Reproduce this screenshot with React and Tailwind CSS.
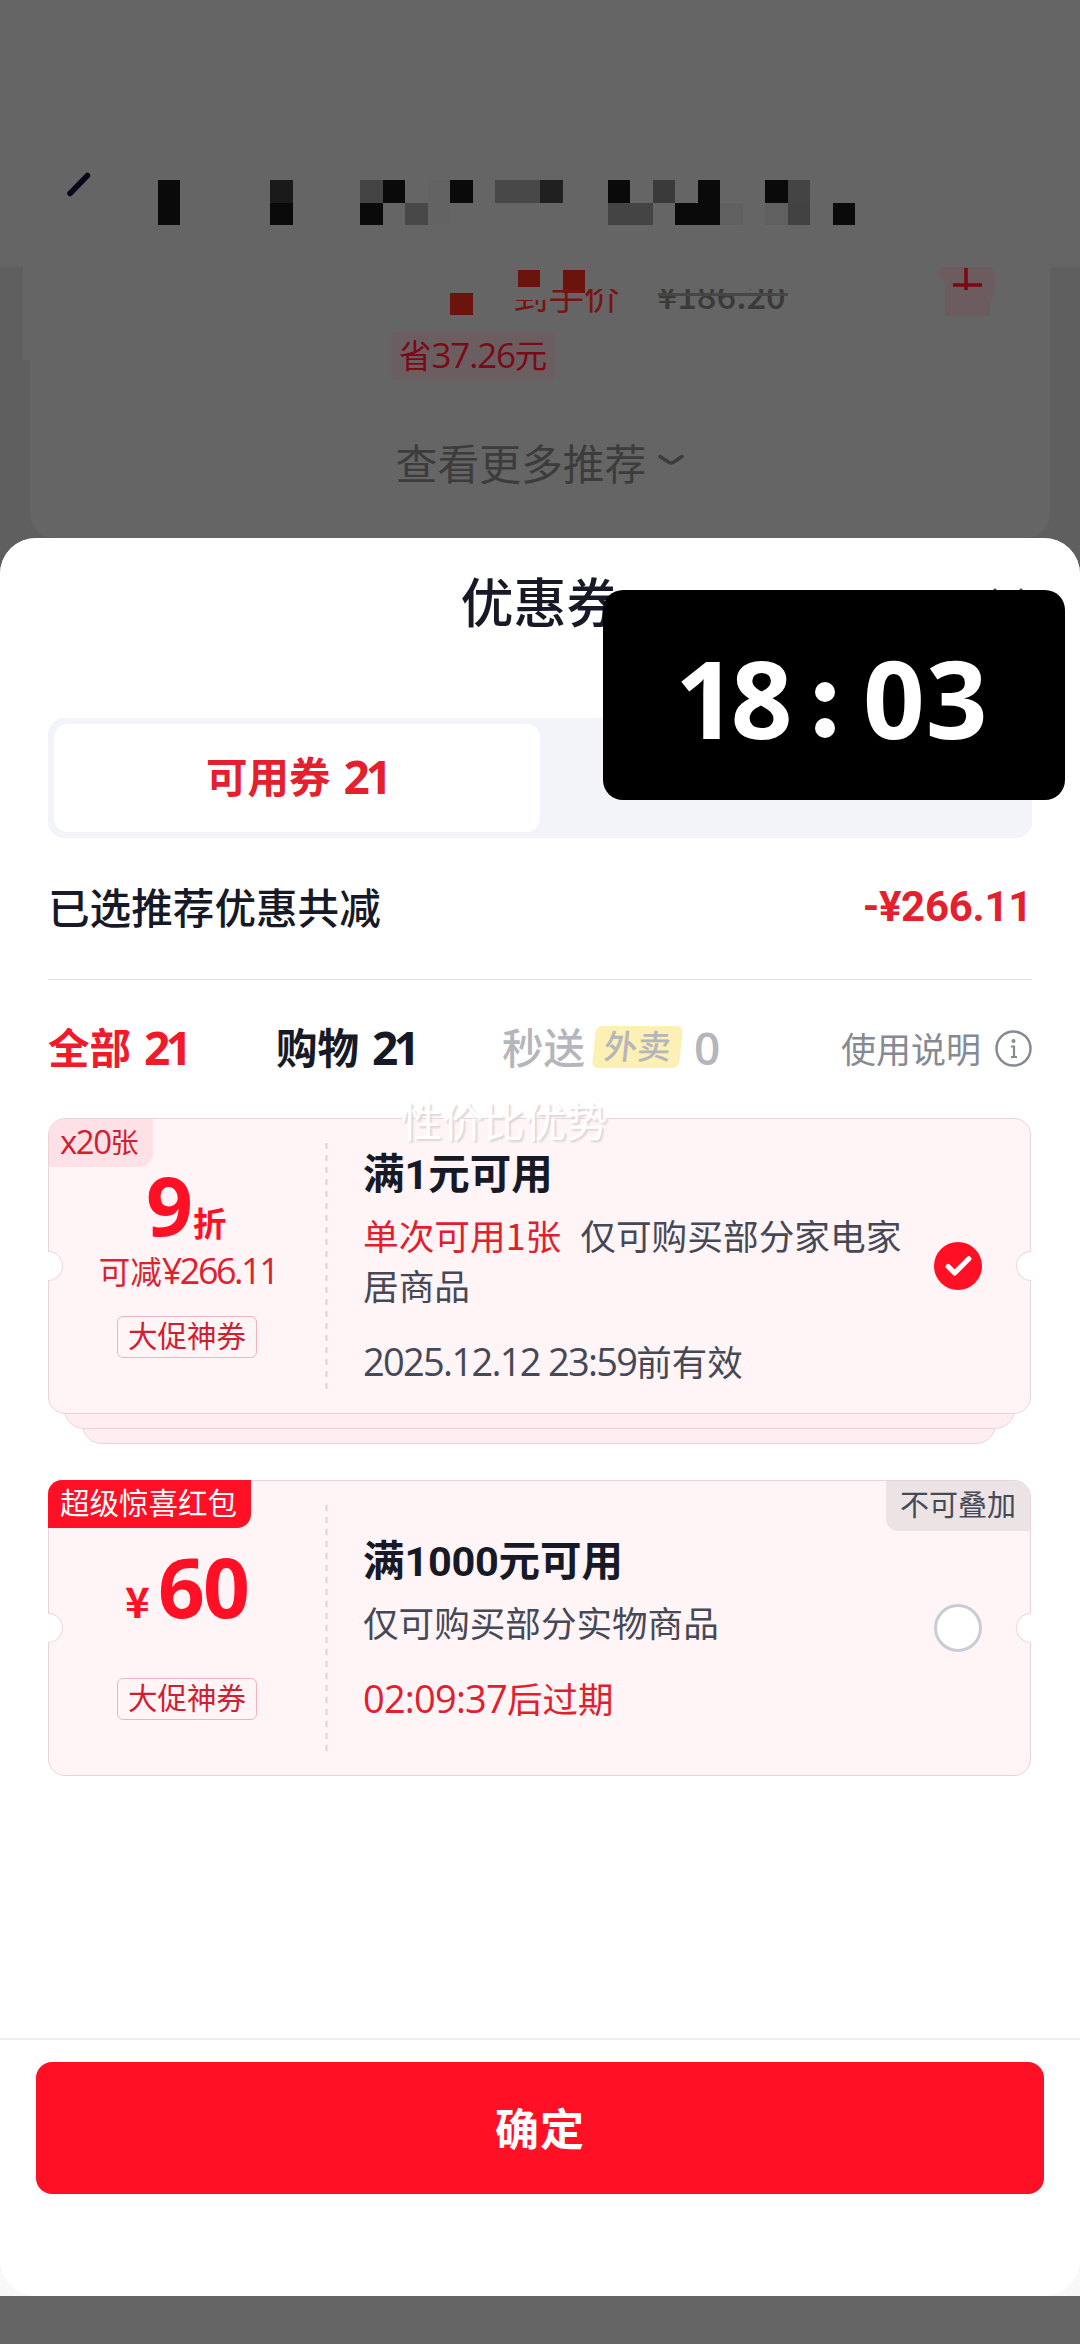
import { Check } from 'lucide-react';

// [column, row, color] on a 22.5px mosaic grid
const headerMosaic = [
    [7, 8, '#0a0a0a'], [7, 9, '#0a0a0a'], [12, 8, '#1a1a1a'], [12, 9, '#0a0a0a'],
    [16, 8, '#444444'], [17, 8, '#0a0a0a'], [16, 9, '#0a0a0a'], [18, 9, '#484848'],
    [19, 8, '#636363'], [19, 9, '#636363'],
    [20, 8, '#0a0a0a'], [22, 8, '#484848'], [23, 8, '#484848'], [24, 8, '#202020'],
    [27, 8, '#0a0a0a'], [29, 8, '#3a3a3a'], [31, 8, '#0a0a0a'], [34, 8, '#0a0a0a'], [35, 8, '#444444'],
    [27, 9, '#444444'], [28, 9, '#444444'], [30, 9, '#0a0a0a'], [31, 9, '#0a0a0a'], [32, 9, '#606060'],
    [34, 9, '#606060'], [35, 9, '#424242'], [37, 9, '#0a0a0a'],
    [20, 13, '#6a140d'], [23, 12, '#6a140d'], [25, 12, '#6a140d'],
];

const Num = ({ children, className = '' }) => (
    <span className={`font-['Open_Sans','Noto_Sans_CJK_SC',sans-serif] leading-none ${className}`}>{children}</span>
);

const Notches = () => (
    <>
        <div className="absolute -left-px top-[132px] w-[15px] h-[30px] rounded-r-full bg-white border border-l-0 border-[#ecd6da]"></div>
        <div className="absolute -right-px top-[132px] w-[15px] h-[30px] rounded-l-full bg-white border border-r-0 border-[#ecd6da]"></div>
    </>
);

const Divider = () => (
    <svg className="absolute left-[276px] top-6 w-[3px] h-[247px]" viewBox="0 0 3 247">
        <path d="M1.5 0V247" stroke="#ebced3" strokeWidth="2" strokeDasharray="6 6" />
    </svg>
);

const Tag = ({ children }) => (
    <div className="absolute left-[68px] top-[197px] w-[140px] h-[42px] rounded-md border border-[#f0b4be] flex items-center justify-center text-[29.5px] leading-none text-[#d0202f] pb-[4px]">
        {children}
    </div>
);

const Coupon = ({ badge, amount, children, control, corner }) => (
    <div className="relative z-10 h-[296px] rounded-[17px] border border-[#ecd3d8] bg-[#fff5f6] flex">
        <div className="w-[278px] shrink-0 text-center">{amount}</div>
        <div className="w-[560px] pl-[36px] shrink-0 whitespace-nowrap">{children}</div>
        <div className="flex-1 flex items-center pl-[47px]">{control}</div>
        {badge}
        {corner}
        <Tag>大促神券</Tag>
        <Divider />
        <Notches />
    </div>
);

const Backdrop = () => (
    <div className="relative h-[2344px] bg-[#656565] overflow-hidden">
        <div className="pt-[267px]">
            <div className="h-[330px] bg-[#5f5f5f]">
                <div className="ml-[23px] mr-[30px] h-[93px] bg-[#656565]"></div>
                <div className="mx-[30px] h-[178px] rounded-b-3xl bg-[#656565] flex justify-center pt-[77px]">
                    <div className="flex items-center h-[50px] text-[41.8px] leading-[50px] text-[#3c3c3c] whitespace-nowrap">
                        <span>查看更多推荐</span>
                        <svg className="ml-3 -mt-1 w-[26px] h-3" viewBox="0 0 26 12" fill="none">
                            <path d="M2 2.5L11 8.500Q13 9.500 15 8.500L24 2.5" stroke="#3c3c3c" strokeWidth="3.5" strokeLinecap="round" />
                        </svg>
                    </div>
                </div>
            </div>
        </div>
        <svg className="absolute left-0 top-0 w-[1080px] h-[340px]" viewBox="0 0 1080 340">
            <path d="M87.500 175.500L70 193.500" stroke="#07071a" strokeWidth="5.500" strokeLinecap="round" />
            <path d="M940 267H993Q999 285 990 303V316H945V283L939 275Z" fill="#6c5c5f" />
            {headerMosaic.map(([col, row, color]) => (
                <rect key={`${col}-${row}`} x={col * 22.5} y={row * 22.5} width="22.5" height="22.5" fill={color} shapeRendering="crispEdges" />
            ))}
            <path d="M966 268V290M953 285H982" stroke="#7a0812" strokeWidth="3.500" />
        </svg>
        <div className="absolute left-[513px] top-[289px] h-[26px] overflow-hidden flex whitespace-nowrap leading-none">
            <div className="-mt-[12px] text-[35.500px] text-[#7a1410]">到手价</div>
            <div className="ml-[38px] -mt-[13px] text-[34.500px] leading-[36px] font-medium text-[#3a3a3a]">¥186.20</div>
        </div>
        <div className="absolute left-[658px] top-[293px] w-[130px] h-[3px] bg-[#464646]"></div>
        <div className="absolute left-[512px] top-[287px] w-9 h-[13px] bg-[#656565]"></div>
        <div className="absolute left-[391px] top-[332px] w-[164px] h-12 rounded-md bg-[#6b5e60] flex items-center pl-[8px] pb-[4px] text-[32.500px] leading-none text-[#7a0a18] whitespace-nowrap">
            省<Num className="text-[35px] tracking-[-1.200px]">37.26</Num>元
        </div>
    </div>
);

const TimerOverlay = () => (
    <div className="absolute z-30 left-[603px] top-[590px] w-[462px] h-[210px] rounded-[20px] bg-black">
        <div className="flex items-center h-[218px] pl-[72px] text-white font-['Open_Sans',sans-serif] font-bold text-[108px] leading-none">
            <span className="w-[115px] tracking-[-6px] -mt-[2px]">18</span>
            <span className="ml-[25px] w-5 flex flex-col gap-4 mt-[22px]">
                <i className="block size-5 rounded-full bg-white"></i>
                <i className="block size-5 rounded-full bg-white"></i>
            </span>
            <span className="ml-7 tracking-[1px] -mt-[2px]">03</span>
        </div>
    </div>
);

const App = () => {
    return (
        <main className="relative w-[1080px] h-[2344px] overflow-hidden font-['Noto_Sans_CJK_SC',sans-serif] text-[#171a26]">
            <Backdrop />
            <div className="absolute inset-x-0 top-[538px] h-[1758px] rounded-t-[36px] bg-[#f8f8f8]">
                <section className="h-full rounded-[36px] bg-white flex flex-col">
                    <header className="relative h-[180px] shrink-0 pt-[32px] text-center text-[53px] leading-[60px] font-medium">
                        优惠券
                        <svg className="absolute left-[992px] top-[49px] size-8" viewBox="0 0 32 32">
                            <path d="M2 2L30 30M30 2L2 30" stroke="#555963" strokeWidth="3" />
                        </svg>
                    </header>

                    <div className="mx-12 h-[120px] shrink-0 rounded-2xl bg-[#f3f4f9] p-[6px]">
                        <div className="w-[486px] h-[108px] rounded-[14px] bg-white flex items-center justify-center pb-[4px] text-[41.500px] leading-none font-bold text-[#e5202e] whitespace-nowrap">
                            可用券<Num className="ml-[13px] text-[46px] tracking-[-4px]">21</Num>
                        </div>
                    </div>

                    <div className="mx-12 h-[142px] shrink-0 border-b border-[#e4e4e7] flex items-center justify-between pb-[4px]">
                        <span className="text-[41.600px] font-[450]">已选推荐优惠共减</span>
                        <span className="font-['Roboto',sans-serif] font-bold text-[42px] tracking-[-0.3px] text-[#e5202e]">-¥266.11</span>
                    </div>

                    <nav className="mx-12 h-[138px] shrink-0 flex items-center whitespace-nowrap text-[41.500px] font-bold leading-none pb-[4px]">
                        <span className="w-[228px] flex items-center text-[#f01a2b]">全部<Num className="ml-[13px] text-[46px] tracking-[-4.500px]">21</Num></span>
                        <span className="w-[226px] flex items-center">购物<Num className="ml-[13px] text-[46px] tracking-[-4.500px]">21</Num></span>
                        <span className="flex items-center text-[#b4b6bc] font-medium">
                            秒送
                            <span className="ml-[9px] w-[87px] h-[42px] -skew-x-6 rounded-md bg-[#fdf0b4] flex items-center justify-center text-[33.500px] pb-[4px]">外卖</span>
                            <Num className="ml-[13px] text-[46px] font-semibold">0</Num>
                        </span>
                        <span className="ml-auto flex items-center text-[35px] font-normal text-[#858a94]">
                            使用说明
                            <svg className="ml-[14px] mt-[3px] size-[37px]" viewBox="0 0 37 37" fill="none" stroke="#858a94">
                                <circle cx="18.500" cy="18.500" r="17" strokeWidth="2.500" />
                                <circle cx="18.500" cy="11" r="2" fill="#858a94" stroke="none" />
                                <path d="M16 16.500H19V27M16 27H22" strokeWidth="2.200" />
                            </svg>
                        </span>
                    </nav>

                    <div className="relative ml-12 mr-[49px] h-[327px] shrink-0">
                        <Coupon
                            badge={
                                <div className="absolute left-0 top-0 w-[104px] h-12 rounded-tl-2xl rounded-br-[14px] bg-[#fde1e6] flex items-center pl-[11px] pb-[4px] text-[28px] leading-none text-[#d0202f] whitespace-nowrap">
                                    <Num className="text-[33px] tracking-[-1.500px]">x20</Num>张
                                </div>
                            }
                            amount={
                                <>
                                    <div className="flex items-baseline pl-[97px] pt-[44px] h-[129px] text-[#ff1024] font-bold whitespace-nowrap">
                                        <Num className="text-[82px] leading-[84px]">9</Num>
                                        <span className="text-[33.500px] leading-none">折</span>
                                    </div>
                                    <div className="text-[31.500px] leading-[44px] text-[#e0202e] whitespace-nowrap">
                                        可减<Num className="text-[36px] tracking-[-2.500px]">¥266.11</Num>
                                    </div>
                                </>
                            }
                            control={
                                <div className="size-12 rounded-full bg-[#ff1024] flex items-center justify-center">
                                    <Check size={31} strokeWidth={4} color="white" />
                                </div>
                            }
                        >
                            <h3 className="mt-[26px] text-[41.500px] leading-[52px] font-bold">满<span className="font-['Roboto']">1</span>元可用</h3>
                            <p className="mt-[9px] text-[35.700px] leading-[50px] text-[#454957]">
                                <span className="text-[#e0202e] mr-[19px]">单次可用1张</span>仅可购买部分家电家<br />居商品
                            </p>
                            <p className="mt-[26px] text-[35.500px] leading-[50px] text-[#454957]"><Num className="text-[38px] tracking-[-1.700px]">2025.12.12 23:59</Num>前有效</p>
                        </Coupon>
                        <div className="absolute left-4 right-4 top-[270px] h-[41px] z-[5] rounded-b-[20px] border border-[#ecd3d8] bg-[#ffeef1]"></div>
                        <div className="absolute left-[34px] right-[35px] top-[270px] h-[56px] rounded-b-[20px] border border-[#ecd3d8] bg-[#ffeef1]"></div>
                        <div className="absolute z-20 left-[353px] -top-[19px] text-[41.300px] leading-none text-white whitespace-nowrap [text-shadow:2px_2px_2px_#ded5d7]">性价比优势</div>
                    </div>

                    <div className="ml-12 mr-[49px] mt-[35px] shrink-0">
                        <Coupon
                            badge={
                                <div className="absolute -left-px -top-px w-[203px] h-12 rounded-tl-[14px] rounded-br-[14px] bg-[#ff1024] flex items-center pl-[12px] pb-[5px] text-[29.500px] leading-none text-white whitespace-nowrap">
                                    超级惊喜红包
                                </div>
                            }
                            amount={
                                <div className="flex items-baseline pl-[76px] pt-[64px] text-[#ff1024] font-bold whitespace-nowrap">
                                    <span className="text-[42px] w-[33px] leading-none text-left">¥</span>
                                    <Num className="text-[82px] leading-[84px] tracking-[-2px]">60</Num>
                                </div>
                            }
                            control={<div className="size-12 rounded-full bg-white border-3 border-[#c9ccd4]"></div>}
                            corner={
                                <div className="absolute right-0 top-0 w-[144px] h-[50px] rounded-tr-2xl rounded-bl-[12px] bg-[#ece3e5] flex items-center justify-center pb-[5px] text-[29px] leading-none text-[#454957] whitespace-nowrap">
                                    不可叠加
                                </div>
                            }
                        >
                            <h3 className="mt-[51px] text-[41.500px] leading-[52px] font-bold">满<span className="font-['Roboto'] tracking-[-0.3px]">1000</span>元可用</h3>
                            <p className="mt-[9px] text-[35.600px] leading-[50px] text-[#454957]">仅可购买部分实物商品</p>
                            <p className="mt-[26px] text-[35.500px] leading-[50px] text-[#e0202e]"><Num className="text-[38px] tracking-[-0.800px]">02:09:37</Num>后过期</p>
                        </Coupon>
                    </div>

                    <footer className="mt-auto h-[258px] shrink-0 border-t-2 border-[#efeff0] px-9 pt-[22px]">
                        <button className="w-full h-[132px] pb-[3px] rounded-2xl bg-[#ff1024] text-white text-[44px] font-bold leading-none tracking-[1px]">确定</button>
                    </footer>
                </section>
            </div>
            <TimerOverlay />
        </main>
    );
};

export default App;
